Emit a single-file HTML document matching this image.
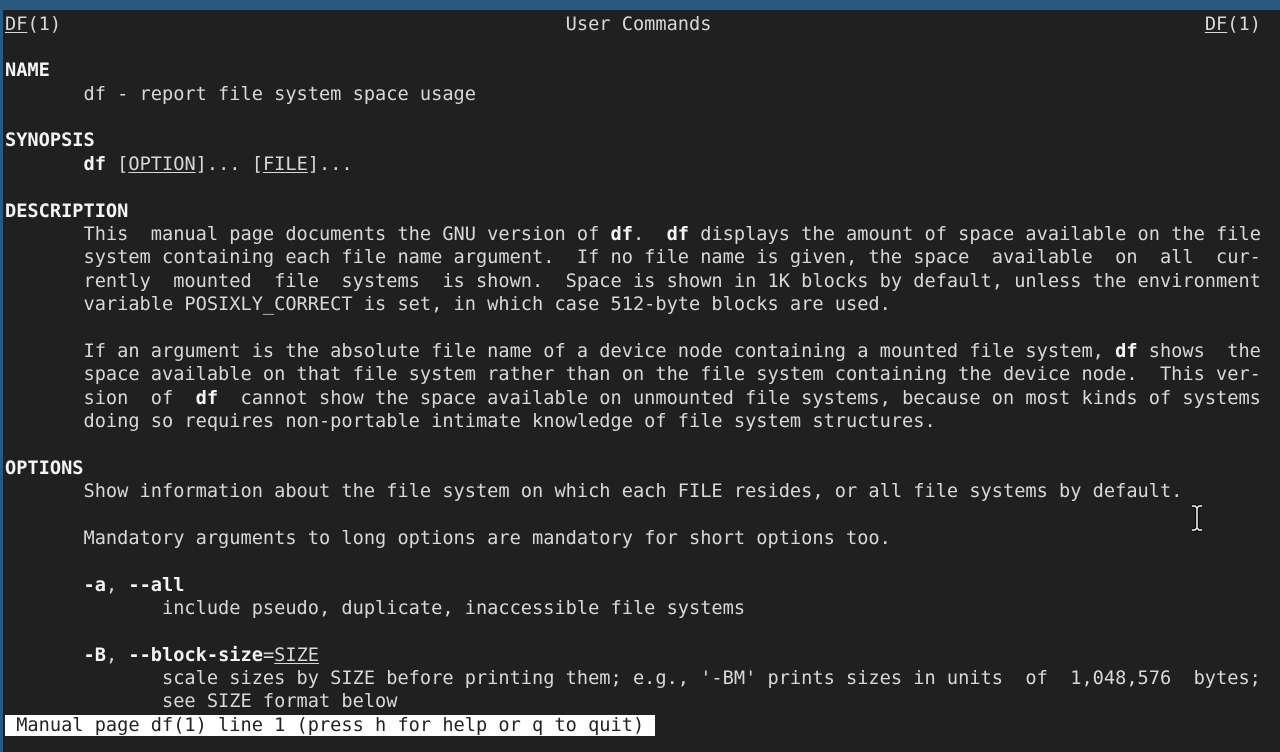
<!DOCTYPE html>
<html><head><style>
html,body{margin:0;padding:0;background:#202020;width:1280px;height:752px;overflow:hidden}
.top{position:absolute;left:0;top:0;width:1280px;height:10px;background:#2a5a80}
.lb{position:absolute;left:0;top:0;width:3px;height:752px;background:#2a5a80}
pre{position:absolute;left:5px;top:12.5px;margin:0;font-family:"DejaVu Sans Mono","Liberation Mono",monospace;font-size:18.64px;line-height:23.37px;color:#d8d8d8;white-space:pre}
b{color:#f4f4f4}
u{text-decoration:underline;text-underline-offset:2px}
.st{background:#fff;color:#222}
</style></head><body>
<div class="top"></div><div class="lb"></div>
<pre><u>DF</u>(1)                                             User Commands                                            <u>DF</u>(1)

<b>NAME</b>
       df - report file system space usage

<b>SYNOPSIS</b>
       <b>df</b> [<u>OPTION</u>]... [<u>FILE</u>]...

<b>DESCRIPTION</b>
       This  manual page documents the GNU version of <b>df</b>.  <b>df</b> displays the amount of space available on the file
       system containing each file name argument.  If no file name is given, the space  available  on  all  cur-
       rently  mounted  file  systems  is shown.  Space is shown in 1K blocks by default, unless the environment
       variable POSIXLY_CORRECT is set, in which case 512-byte blocks are used.

       If an argument is the absolute file name of a device node containing a mounted file system, <b>df</b> shows  the
       space available on that file system rather than on the file system containing the device node.  This ver-
       sion  of  <b>df</b>  cannot show the space available on unmounted file systems, because on most kinds of systems
       doing so requires non-portable intimate knowledge of file system structures.

<b>OPTIONS</b>
       Show information about the file system on which each FILE resides, or all file systems by default.

       Mandatory arguments to long options are mandatory for short options too.

       <b>-a</b>, <b>--all</b>
              include pseudo, duplicate, inaccessible file systems

       <b>-B</b>, <b>--block-size</b>=<u>SIZE</u>
              scale sizes by SIZE before printing them; e.g., '-BM' prints sizes in units  of  1,048,576  bytes;
              see SIZE format below
<span class="st"> Manual page df(1) line 1 (press h for help or q to quit) </span></pre>
<svg style="position:absolute;left:1189px;top:504px" width="16" height="28" viewBox="0 0 16 28"><path d="M3 2h3l2 2 2-2h3M8 4v20M3 26h3l2-2 2 2h3" fill="none" stroke="#000" stroke-width="3.5"/><path d="M3 2h3l2 2 2-2h3M8 4v20M3 26h3l2-2 2 2h3" fill="none" stroke="#fff" stroke-width="1.5"/></svg>
</body></html>
